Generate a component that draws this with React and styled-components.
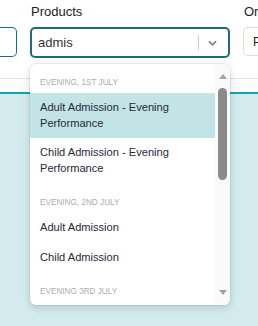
import React from "react";
import styled, { createGlobalStyle } from "styled-components";

const GlobalStyle = createGlobalStyle`
  html, body {
    margin: 0;
    padding: 0;
    background: #d3ebec;
    font-family: "Liberation Sans", Arial, sans-serif;
  }
  body {
    width: 258px;
    height: 326px;
    overflow: hidden;
  }
`;

const groups = [
  {
    title: "Evening, 1st July",
    options: [
      { label: "Adult Admission - Evening Performance", focused: true },
      { label: "Child Admission - Evening Performance" },
    ],
  },
  {
    title: "Evening, 2nd July",
    options: [{ label: "Adult Admission" }, { label: "Child Admission" }],
  },
  {
    title: "Evening 3rd July",
    options: [],
  },
];

function App() {
  return (
    <Page>
      <GlobalStyle />
      <FilterBar>
        <FieldRow>
          <Field>
            <Label>&nbsp;</Label>
            <CutBox />
          </Field>
          <Field>
            <Label>Products</Label>
            <SelectBox>
              <SelectValue>admis</SelectValue>
              <Separator />
              <Chevron viewBox="0 0 10 6">
                <path d="M1 1 L5 5 L9 1" />
              </Chevron>
            </SelectBox>
            <Menu>
              <MenuList>
                {groups.map((g) => (
                  <Group key={g.title}>
                    <GroupHeading>{g.title}</GroupHeading>
                    {g.options.map((o, i) => (
                      <Option key={i} $focused={o.focused}>
                        {o.label}
                      </Option>
                    ))}
                  </Group>
                ))}
              </MenuList>
              <ScrollTrack>
                <ArrowUp />
                <Thumb />
                <ArrowDown />
              </ScrollTrack>
            </Menu>
          </Field>
          <Field>
            <Label>Or</Label>
            <PlainBox>P</PlainBox>
          </Field>
        </FieldRow>
      </FilterBar>
      <Strip />
      <Content />
    </Page>
  );
}

const Page = styled.div`
  display: flex;
  flex-direction: column;
  height: 326px;
`;

const FilterBar = styled.div`
  background: #ffffff;
  height: 78px;
  border-bottom: 1px solid #e2e2ea;
  box-sizing: content-box;
`;

const FieldRow = styled.div`
  display: grid;
  grid-template-columns: 17px 200px 15px;
  column-gap: 13px;
  padding-top: 4px;
`;

const Field = styled.div`
  position: relative;
  display: flex;
  flex-direction: column;
`;

const Label = styled.div`
  font-size: 13px;
  line-height: 15px;
  color: #222;
  padding-left: 1px;
  margin-bottom: 8px;
  white-space: nowrap;
  overflow: hidden;
`;

const CutBox = styled.div`
  height: 30px;
  box-sizing: border-box;
  border: 1px solid #1f6c78;
  border-left: none;
  border-radius: 0 5px 5px 0;
`;

const SelectBox = styled.div`
  height: 31px;
  box-sizing: border-box;
  border: 2px solid #1f6c78;
  border-radius: 5px;
  display: flex;
  align-items: center;
  padding-left: 6px;
  padding-right: 11px;
`;

const SelectValue = styled.div`
  flex: 1;
  font-size: 13px;
  color: #333;
`;

const Separator = styled.div`
  width: 1px;
  height: 15px;
  background: #cccccc;
  margin-right: 9px;
`;

const Chevron = styled.svg`
  width: 9px;
  height: 6px;
  fill: none;
  stroke: #777;
  stroke-width: 1.7;
`;

const PlainBox = styled.div`
  height: 29px;
  box-sizing: border-box;
  border: 1px solid #dddddd;
  border-right: none;
  border-radius: 5px 0 0 5px;
  font-size: 12px;
  color: #222;
  display: flex;
  align-items: center;
  padding-left: 9px;
`;

const Menu = styled.div`
  position: absolute;
  top: calc(100% + 6px);
  left: 0;
  width: 200px;
  height: 241px;
  background: #ffffff;
  border-radius: 6px;
  box-shadow: 0 0 0 1px rgba(0, 0, 0, 0.06), 0 3px 8px rgba(0, 0, 0, 0.14);
  display: flex;
  overflow: hidden;
  z-index: 2;
`;

const MenuList = styled.div`
  flex: 1;
  overflow: hidden;
  padding-top: 6px;
`;

const Group = styled.div`
  padding: 7px 0;
`;

const GroupHeading = styled.div`
  font-size: 8.2px;
  line-height: 12px;
  text-transform: uppercase;
  color: #adadad;
  padding: 0 10px;
  margin-bottom: 4px;
`;

const Option = styled.div`
  font-size: 11.1px;
  line-height: 15.5px;
  color: #28283a;
  padding: 7px 10px;
  background: ${(p) => (p.$focused ? "#c2e4e4" : "transparent")};
`;

const ScrollTrack = styled.div`
  width: 15px;
  background: #f9f9f9;
  display: flex;
  flex-direction: column;
  align-items: center;
  padding: 10px 0;
  box-sizing: border-box;
`;

const ArrowUp = styled.div`
  width: 0;
  height: 0;
  border-left: 4px solid transparent;
  border-right: 4px solid transparent;
  border-bottom: 5px solid #a3a3a3;
`;

const ArrowDown = styled.div`
  width: 0;
  height: 0;
  margin-top: auto;
  border-left: 4px solid transparent;
  border-right: 4px solid transparent;
  border-top: 5px solid #a3a3a3;
`;

const Thumb = styled.div`
  width: 9px;
  height: 92px;
  margin-top: 9px;
  border-radius: 4.5px;
  background: #8b8b8b;
`;

const Strip = styled.div`
  height: 13px;
  background: #fdfdfd;
  border-bottom: 2px solid #12a4b2;
`;

const Content = styled.div`
  flex: 1;
  background: #d3ebec;
`;

export default App;
